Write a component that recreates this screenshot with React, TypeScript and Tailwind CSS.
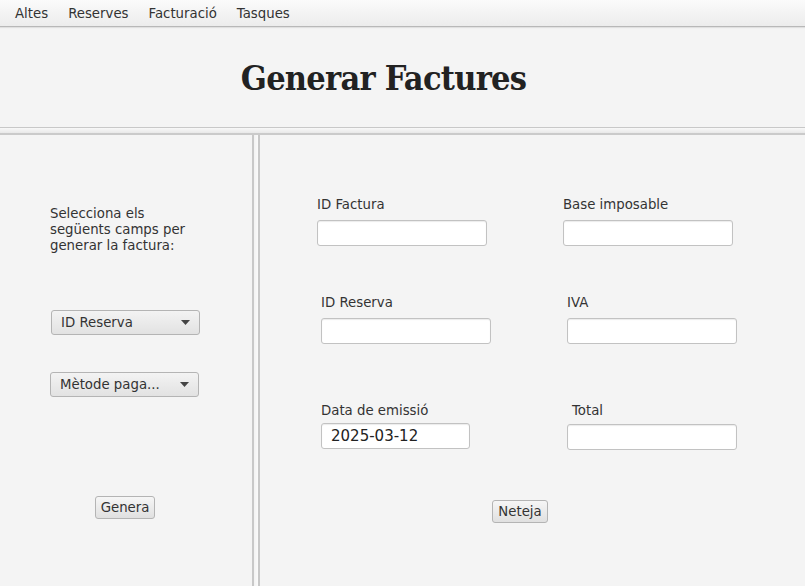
import React from 'react';

const sans = { fontFamily: '"DejaVu Sans", "Liberation Sans", sans-serif' };

function Field({ label, value = '', width = 'w-[170px]', gap = 'mb-[8px]', labelPad = '' }: { label: string; value?: string; width?: string; gap?: string; labelPad?: string }) {
  return (
    <div className={width}>
      <div className={`h-[16px] leading-[17px] text-[13.3px] text-[#333] ${gap} ${labelPad}`}>{label}</div>
      <div className="h-[26px] w-full rounded-[3px] border border-[#c2c2c2] bg-white shadow-[inset_0_1px_1px_rgba(0,0,0,0.08)] px-[9px] leading-[24px] text-[15px] text-[#222]">
        {value}
      </div>
    </div>
  );
}

function Combo({ label }: { label: string }) {
  return (
    <div className="h-[25px] w-[149px] rounded-[3px] border border-[#b4b4b4] bg-gradient-to-b from-[#f3f3f3] to-[#e2e2e2] flex items-center pl-[9px] pr-[9px] text-[13.3px] text-[#333]">
      <span className="flex-1">{label}</span>
      <svg width="9" height="5" viewBox="0 0 9 5"><path d="M0 0h9L4.5 5z" fill="#444" /></svg>
    </div>
  );
}

function Button({ label, className = '' }: { label: string; className?: string }) {
  return (
    <div className={`h-[23px] rounded-[3px] border border-[#b4b4b4] bg-gradient-to-b from-[#f6f6f6] to-[#e0e0e0] flex items-center justify-center text-[13.3px] text-[#333] ${className}`}>
      {label}
    </div>
  );
}

export default function App() {
  return (
    <div className="w-[805px] h-[586px] overflow-hidden bg-[#f4f4f4] flex flex-col" style={sans}>
      {/* Menu */}
      <div className="h-[27px] shrink-0 flex items-center pl-[5px] pt-[1px] bg-gradient-to-b from-[#fbfbfb] to-[#ececec] border-b border-[#b8b8b8] shadow-[0_1px_1px_rgba(0,0,0,0.08)] text-[13.3px] text-[#333]">
        {['Altes', 'Reserves', 'Facturació', 'Tasques'].map(m => (
          <span key={m} className="px-[10px]">{m}</span>
        ))}
      </div>

      {/* Title */}
      <div className="h-[100px] shrink-0 flex items-center justify-center pt-[2px] pr-[38px]">
        <h1 className="text-[34px] font-bold text-[#222] tracking-[-0.75px]" style={{ fontFamily: '"DejaVu Serif Condensed", "DejaVu Serif", serif' }}>
          Generar Factures
        </h1>
      </div>

      {/* Horizontal divider */}
      <div className="h-[8px] shrink-0 border-t border-[#c8c8c8] border-b-2 border-b-[#cacaca] bg-gradient-to-b from-[#f8f8f8] to-[#e8e8e8]" />

      {/* Body */}
      <div className="flex-1 flex">
        <div className="w-[252px] shrink-0 flex flex-col">
          <div className="pt-[71px] pl-[50px] text-[13.3px] leading-[16px] text-[#333]">
            Selecciona els<br />següents camps per<br />generar la factura:
          </div>
          <div className="mt-[56px] ml-[51px]"><Combo label="ID Reserva" /></div>
          <div className="mt-[37px] ml-[50px]"><Combo label="Mètode paga..." /></div>
          <div className="mt-[99px] ml-[95px]"><Button label="Genera" className="w-[60px]" /></div>
        </div>

        <div className="w-[8px] shrink-0 border-l-2 border-[#c8c8c8] border-r-2 bg-gradient-to-r from-[#f2f2f2] to-[#fafafa]" />

        <div className="flex-1 flex flex-col">
          <div className="mt-[61px] pl-[57px] flex">
            <Field label="ID Factura" />
            <div className="ml-[76px]"><Field label="Base imposable" /></div>
          </div>
          <div className="mt-[48px] pl-[61px] flex">
            <Field label="ID Reserva" />
            <div className="ml-[76px]"><Field label="IVA" /></div>
          </div>
          <div className="mt-[58px] pl-[61px] flex">
            <Field label="Data de emissió" value="2025-03-12" width="w-[149px]" gap="mb-[5px]" />
            <div className="ml-[97px]"><Field label="Total" gap="mb-[6px]" labelPad="pl-[5px]" /></div>
          </div>
          <div className="mt-[50px] ml-[232px]"><Button label="Neteja" className="w-[56px]" /></div>
        </div>
      </div>
    </div>
  );
}
